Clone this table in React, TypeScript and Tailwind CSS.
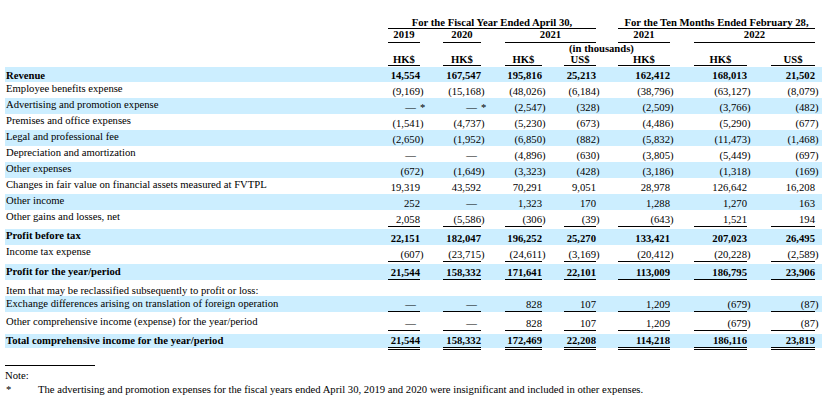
import React from "react";

const cols = [
  { ml: "ml-0", w: "w-[32px]" },
  { ml: "ml-[19px]", w: "w-[38px]" },
  { ml: "ml-[20px]", w: "w-[37px]" },
  { ml: "ml-[18px]", w: "w-[32px]" },
  { ml: "ml-[18px]", w: "w-[52px]" },
  { ml: "ml-[20px]", w: "w-[53px]" },
  { ml: "ml-[20px]", w: "w-[44px]" },
];

function cx(...a: (string | false | undefined | null)[]) {
  return a.filter(Boolean).join(" ");
}

type RowProps = {
  label: string;
  vals: string[];
  bold?: boolean;
  band?: boolean;
  h: string;
  lp: string;
  np: string;
  u?: "s" | "d";
};

function split(v: string): [string, string, boolean] {
  if (v === "— *") return ["—", "*", true];
  if (v === "—") return ["—", "", true];
  if (v.endsWith(")")) return [v.slice(0, -1), ")", false];
  return [v, "", false];
}

function Row({ label, vals, bold, band, h, lp, np, u }: RowProps) {
  return (
    <div className={cx("flex w-[817px]", band && "bg-[#cceeff]", h)}>
      <div className={cx("w-[383px] shrink-0 pl-[1px] leading-[12px] whitespace-nowrap", lp, bold && "font-bold")}>
        {label}
      </div>
      {vals.map((v, i) => {
        const [main, suf, dash] = split(v);
        return (
          <div key={i} className={cx("flex shrink-0 items-start", cols[i].ml)}>
            <div
              className={cx(
                cols[i].w,
                "text-right leading-[10px] whitespace-nowrap",
                np,
                bold && "font-bold",
                u === "s" && "border-b border-black pb-[2px]",
                u === "d" && "border-b-[3px] border-double border-black pb-[2px]",
                dash && "pr-[4px]"
              )}
            >
              {main}
            </div>
            <div className={cx("w-[4px] leading-[10px] whitespace-nowrap", np, bold && "font-bold")}>{suf}</div>
          </div>
        );
      })}
    </div>
  );
}

export default function App() {
  return (
    <div className="w-[826px] h-[401px] bg-white text-black pl-[5px] pt-[17px] text-[10.67px] font-['Liberation_Serif','Times_New_Roman',serif] overflow-hidden">
      {/* Header row A */}
      <div className="flex font-bold">
        <div className="w-[383px] shrink-0" />
        <div className="w-[208px] text-center leading-[10px] pb-[1px] border-b border-black whitespace-nowrap">
          For the Fiscal Year Ended April 30,
        </div>
        <div className="ml-[22px] w-[197px] text-center leading-[10px] pb-[1px] border-b border-black whitespace-nowrap">
          For the Ten Months Ended February 28,
        </div>
      </div>
      {/* Header row B */}
      <div className="flex font-bold">
        <div className="w-[383px] shrink-0" />
        <div className="w-[32px] text-center leading-[10px] pb-[3px] border-b border-black">2019</div>
        <div className="ml-[23px] w-[38px] text-center leading-[10px] pb-[3px] border-b border-black">2020</div>
        <div className="ml-[24px] w-[91px] text-center leading-[10px] pb-[3px] border-b border-black">2021</div>
        <div className="ml-[22px] w-[52px] text-center leading-[10px] pb-[3px] border-b border-black">2021</div>
        <div className="ml-[24px] w-[121px] text-center leading-[10px] pb-[3px] border-b border-black">2022</div>
      </div>
      {/* Header row C */}
      <div className="flex font-bold h-[11px]">
        <div className="w-[383px] shrink-0" />
        <div className="w-[427px] text-center leading-[10px]">(in thousands)</div>
      </div>
      {/* Header row D */}
      <div className="flex font-bold">
        <div className="w-[383px] shrink-0" />
        {["HK$", "HK$", "HK$", "US$", "HK$", "HK$", "US$"].map((t, i) => (
          <div key={i} className={cx("flex shrink-0 items-start", cols[i].ml)}>
            <div className={cx(cols[i].w, "text-center leading-[10px] pb-[1px] border-b border-black")}>{t}</div>
            <div className="w-[4px]" />
          </div>
        ))}
      </div>

      <div className="mt-[1px]">
        <Row label="Revenue" bold band h="h-[15px]" lp="pt-[2px]" np="pt-[3px]"
          vals={["14,554", "167,547", "195,816", "25,213", "162,412", "168,013", "21,502"]} />
        <Row label="Employee benefits expense" h="h-[16px]" lp="pt-0" np="pt-[4px]"
          vals={["(9,169)", "(15,168)", "(48,026)", "(6,184)", "(38,796)", "(63,127)", "(8,079)"]} />
        <Row label="Advertising and promotion expense" band h="h-[16px]" lp="pt-0" np="pt-[4px]"
          vals={["— *", "— *", "(2,547)", "(328)", "(2,509)", "(3,766)", "(482)"]} />
        <Row label="Premises and office expenses" h="h-[16px]" lp="pt-0" np="pt-[4px]"
          vals={["(1,541)", "(4,737)", "(5,230)", "(673)", "(4,486)", "(5,290)", "(677)"]} />
        <Row label="Legal and professional fee" band h="h-[16px]" lp="pt-0" np="pt-[4px]"
          vals={["(2,650)", "(1,952)", "(6,850)", "(882)", "(5,832)", "(11,473)", "(1,468)"]} />
        <Row label="Depreciation and amortization" h="h-[16px]" lp="pt-0" np="pt-[4px]"
          vals={["—", "—", "(4,896)", "(630)", "(3,805)", "(5,449)", "(697)"]} />
        <Row label="Other expenses" band h="h-[16px]" lp="pt-0" np="pt-[4px]"
          vals={["(672)", "(1,649)", "(3,323)", "(428)", "(3,186)", "(1,318)", "(169)"]} />
        <Row label="Changes in fair value on financial assets measured at FVTPL" h="h-[16px]" lp="pt-0" np="pt-[4px]"
          vals={["19,319", "43,592", "70,291", "9,051", "28,978", "126,642", "16,208"]} />
        <Row label="Other income" band h="h-[16px]" lp="pt-0" np="pt-[4px]"
          vals={["252", "—", "1,323", "170", "1,288", "1,270", "163"]} />
        <Row label="Other gains and losses, net" h="h-[19px]" lp="pt-0" np="pt-[4px]" u="s"
          vals={["2,058", "(5,586)", "(306)", "(39)", "(643)", "1,521", "194"]} />
        <Row label="Profit before tax" bold band h="h-[16px]" lp="pt-0" np="pt-[4px]"
          vals={["22,151", "182,047", "196,252", "25,270", "133,421", "207,023", "26,495"]} />
        <Row label="Income tax expense" h="h-[19px]" lp="pt-0" np="pt-[4px]" u="s"
          vals={["(607)", "(23,715)", "(24,611)", "(3,169)", "(20,412)", "(20,228)", "(2,589)"]} />
        <Row label="Profit for the year/period" bold band h="h-[16px]" lp="pt-[1px]" np="pt-[3px]" u="s"
          vals={["21,544", "158,332", "171,641", "22,101", "113,009", "186,795", "23,906"]} />
        <Row label="Item that may be reclassified subsequently to profit or loss:" h="h-[16px]" lp="pt-[4px]" np="pt-0"
          vals={[]} />
        <Row label="Exchange differences arising on translation of foreign operation" band h="h-[16px]" lp="pt-[1px]" np="pt-[3px]" u="s"
          vals={["—", "—", "828", "107", "1,209", "(679)", "(87)"]} />
        <Row label="Other comprehensive income (expense) for the year/period" h="h-[22px]" lp="pt-[3px]" np="pt-[6px]" u="s"
          vals={["—", "—", "828", "107", "1,209", "(679)", "(87)"]} />
        <Row label="Total comprehensive income for the year/period" bold band h="h-[14px]" lp="pt-0" np="pt-[1px]" u="d"
          vals={["21,544", "158,332", "172,469", "22,208", "114,218", "186,116", "23,819"]} />
      </div>

      <div className="mt-[17px] w-[90px] h-px bg-black" />
      <div className="mt-[3px] leading-[12px]">Note:</div>
      <div className="mt-[2px] flex leading-[12px]">
        <div className="w-[33px] pl-[1px]">*</div>
        <div className="whitespace-nowrap">
          The advertising and promotion expenses for the fiscal years ended April 30, 2019 and 2020 were insignificant and included in other expenses.
        </div>
      </div>
    </div>
  );
}
